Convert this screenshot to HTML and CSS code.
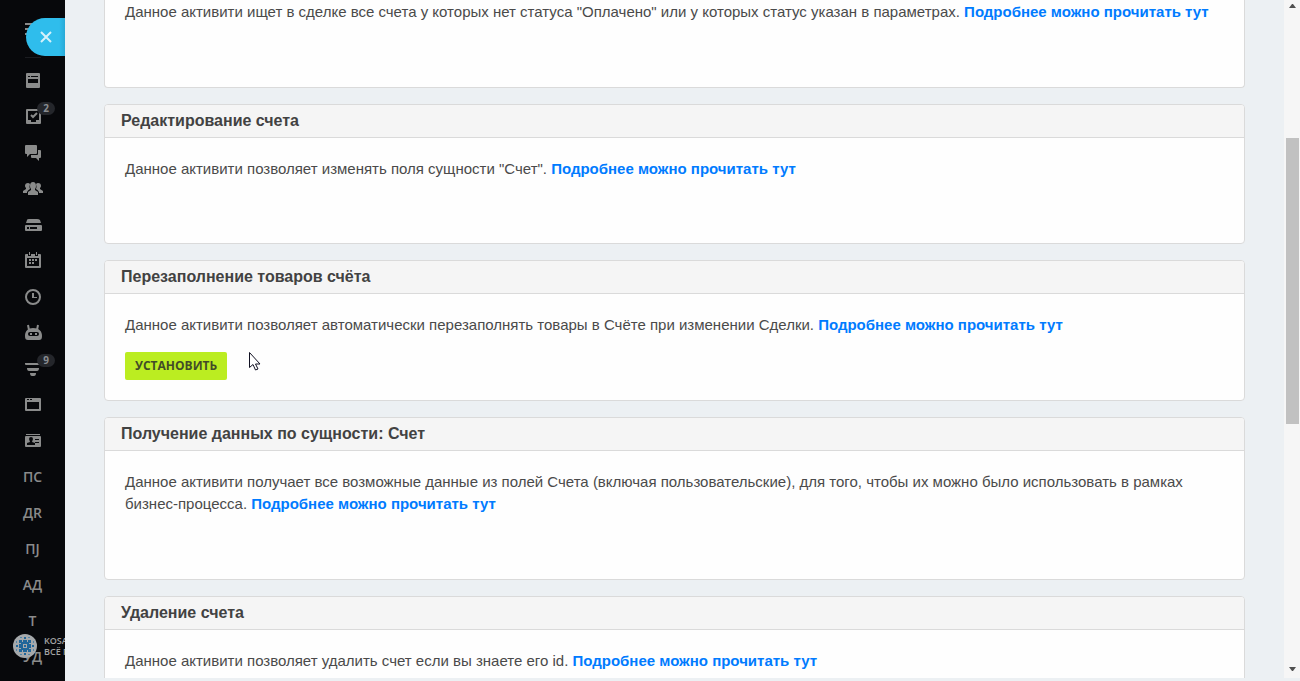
FILE: index.html
```html
<!DOCTYPE html>
<html lang="ru">
<head>
<meta charset="utf-8">
<meta name="viewport" content="width=device-width, initial-scale=1">
<title>Активити для счетов</title>
<link rel="stylesheet" href="styles.css">
</head>
<body>
<div class="app">
  <nav class="sidebar" aria-label="Главное меню">
    <div class="menu-top">
      <svg class="burger" width="16" height="13" viewBox="0 0 16 13"><path d="M0 1h16M0 6h16M0 11h16" stroke="#8a8a8a" stroke-width="2"/></svg>
    </div>
    <a class="item" href="#" aria-label="Лента"><svg class="icon" viewBox="0 0 20 20"><path fill-rule="evenodd" d="M4 2h12q1 0 1 1v13q0 1-1 1H4q-1 0-1-1V3q0-1 1-1zM5 5v1h2V5zM8 5v1h7V5zM5 8v4h10V8z"/></svg></a>
    <a class="item" href="#" aria-label="Задачи"><svg class="icon" viewBox="0 0 20 20"><path fill-rule="evenodd" d="M4 2h13q1 0 1 1v13q0 1-1 1H4q-1 0-1-1V3q0-1 1-1zM5 4v9h3v2h5v-2h3V4z"/><path d="M8 8l2 2 4-4" fill="none" stroke="#8a8b8b" stroke-width="2"/></svg><span class="badge">2</span></a>
    <a class="item" href="#" aria-label="Чат"><svg class="icon" viewBox="0 0 20 20"><path d="M3 2h10q1 0 1 1v7q0 1-1 1H7l-3 3v-3H3q-1 0-1-1V3q0-1 1-1z"/><path d="M15 7h2q1 0 1 1v6q0 1-1 1h-1v3l-3-3H9q-1 0-1-1v-2h6q1 0 1-1z"/></svg></a>
    <a class="item" href="#" aria-label="Группы"><svg class="icon" viewBox="0 0 20 20"><path d="M10 3q3 0 3 4 0 2-1 3v1l3 2v3H5v-3l3-2v-1Q7 9 7 7q0-4 3-4z"/><path d="M5 4q1 0 2 1-1 3 0 5-2 1-3 3v1H0v-2l3-2V9Q2 8 2 7q0-3 3-3zM15 4q-1 0-2 1 1 3 0 5 2 1 3 3v1h4v-2l-3-2V9q1-1 1-2 0-3-3-3z"/></svg></a>
    <a class="item" href="#" aria-label="Диск"><svg class="icon" viewBox="0 0 20 20"><path d="M6 4h8q2 0 3 1l1 3H3l1-3q0-1 2-1z"/><path fill-rule="evenodd" d="M3 10h15q1 0 1 1v4q0 1-1 1H3q-1 0-1-1v-4q0-1 1-1zM4 12v2h2v-2zM7 12v2h7v-2z"/></svg></a>
    <a class="item" href="#" aria-label="Календарь"><svg class="icon" viewBox="0 0 20 20"><path fill-rule="evenodd" d="M3 3h2v2h3V3h4v2h3V3h2q1 0 1 1v12q0 1-1 1H3q-1 0-1-1V4q0-1 1-1zM4 7v8h12V7z"/><path d="M6 1h1v3H6zM13 1h1v3h-1zM9 8h2v2H9zM12 8h2v2h-2zM6 8h2v2H6zM6 11h2v2H6zM9 11h2v2H9z"/></svg></a>
    <a class="item" href="#" aria-label="Время"><svg class="icon" viewBox="0 0 20 20"><circle cx="10" cy="10" r="7" fill="none" stroke="#8a8b8b" stroke-width="2"/><path d="M9 6h2v4h3v1H9z"/></svg></a>
    <a class="item" href="#" aria-label="Роботы"><svg class="icon" viewBox="0 0 20 20"><path d="M5 2l1 5M15 2l-1 5" stroke="#8a8b8b" stroke-width="2"/><path fill-rule="evenodd" d="M10 5c6 0 9 3 9 8 0 3-1 4-3 4H5c-2 0-3-1-3-4 0-5 3-8 8-8zM7 9q-2 0-2 2t2 2h7q2 0 2-2t-2-2z"/><path d="M7 10h2v2H7zM12 10h2v2h-2z"/></svg></a>
    <a class="item" href="#" aria-label="Воронка"><svg class="icon" viewBox="0 0 20 20"><path d="M2 4h16v1q0 1-1 1H3Q2 6 2 5zM4 9h12q0 3-2 3H6q-2 0-2-3zM7 14h6q0 3-2 3H9q-2 0-2-3z"/></svg><span class="badge">9</span></a>
    <a class="item" href="#" aria-label="Сайты"><svg class="icon" viewBox="0 0 20 20"><path fill-rule="evenodd" d="M3 3h14q1 0 1 1v11q0 1-1 1H3q-1 0-1-1V4q0-1 1-1zM4 7v7h12V7zM4 4v1h2V4zM7 4v1h2V4z"/></svg></a>
    <a class="item" href="#" aria-label="Контакты"><svg class="icon" viewBox="0 0 20 20"><path d="M3 3h14v1H3z"/><path fill-rule="evenodd" d="M3 5h14q1 0 1 1v9q0 1-1 1H3q-1 0-1-1V6q0-1 1-1zM8 6Q6 6 6 8l1 3-3 1v2h8v-2l-3-1 1-3q0-2-2-2zM12 8v1h4V8zM12 11v1h4v-1z"/></svg></a>
    <a class="item" href="#">ПС</a>
    <a class="item" href="#">ДR</a>
    <a class="item" href="#">ПJ</a>
    <a class="item" href="#">АД</a>
    <a class="item" href="#">Т</a>
    <a class="item" href="#">УД</a>
    <button class="close" type="button" aria-label="Закрыть"><svg width="12" height="12" viewBox="0 0 12 12"><path d="M1 1l10 10M11 1L1 11" stroke="#d5f2fb" stroke-width="2"/></svg></button>
    <div class="brand">
      <svg class="brand-logo" viewBox="0 0 24 24"><circle cx="12" cy="12" r="12" fill="#a5a9ac"/><path fill="#20669a" d="M6 6h3v3H6zM10 6h4v3h-4zM15 6h3v3h-3zM6 10h3v4H6zM15 10h3v4h-3zM6 15h3v3H6zM10 15h4v3h-4zM15 15h3v3h-3zM8 8h8v2H8zM8 14h8v2H8zM8 9h2v6H8zM14 9h2v6h-2z"/><path fill="#20669a" d="M11 11h2v2h-2zM11 3h2v2h-2zM11 19h2v2h-2zM3 11h2v2H3zM19 11h2v2h-2z"/><path fill="#5585a8" d="M7 3h2v1H7zM15 3h2v1h-2zM7 20h2v1H7zM15 20h2v1h-2zM3 7h1v2H3zM3 15h1v2H3zM20 7h1v2h-1zM20 15h1v2h-1z"/></svg>
      <span class="brand-text">KOSAREV<br>ВСЁ ПРОСТО</span>
    </div>
  </nav>

  <div class="panel">
    <main class="content">
      <section class="card card-scrolled">
        <p class="text">Данное активити ищет в сделке все счета у которых нет статуса "Оплачено" или у которых статус указан в параметрах. <a class="more" href="#">Подробнее можно прочитать тут</a></p>
      </section>
      <section class="card">
        <h2 class="title">Редактирование счета</h2>
        <div class="body"><p class="text">Данное активити позволяет изменять поля сущности "Счет". <a class="more" href="#">Подробнее можно прочитать тут</a></p></div>
      </section>
      <section class="card">
        <h2 class="title">Перезаполнение товаров счёта</h2>
        <div class="body">
          <p class="text">Данное активити позволяет автоматически перезаполнять товары в Счёте при изменении Сделки. <a class="more" href="#">Подробнее можно прочитать тут</a></p>
          <button class="install" type="button">УСТАНОВИТЬ</button>
        </div>
      </section>
      <section class="card card-tall">
        <h2 class="title">Получение данных по сущности: Счет</h2>
        <div class="body"><p class="text">Данное активити получает все возможные данные из полей Счета (включая пользовательские), для того, чтобы их можно было использовать в рамках бизнес-процесса. <a class="more" href="#">Подробнее можно прочитать тут</a></p></div>
      </section>
      <section class="card">
        <h2 class="title">Удаление счета</h2>
        <div class="body"><p class="text">Данное активити позволяет удалить счет если вы знаете его id. <a class="more" href="#">Подробнее можно прочитать тут</a></p></div>
      </section>
    </main>
    <div class="scrollbar" aria-hidden="true">
      <svg class="arrow" viewBox="0 0 7 4"><path d="M0 4h7L4 0H3z"/></svg>
      <div class="track"><div class="thumb"></div></div>
      <svg class="arrow" viewBox="0 0 7 4"><path d="M0 0h7L4 4H3z"/></svg>
    </div>
  </div>
</div>
<svg class="cursor" width="12" height="20" viewBox="0 0 12 20"><path d="M.5 .5v15l3.500-3 2.500 5.500 2.500-1L6.500 12H11z" fill="#fff" stroke="#111122"/></svg>
</body>
</html>
```

FILE: styles.css
```css
* { box-sizing: border-box; }

body {
  margin: 0;
  background: #ecf0f3;
  color: #4a4a4a;
  font-family: "Liberation Sans", Arial, sans-serif;
  font-size: 15px;
  line-height: 22px;
}

.app {
  display: flex;
  height: 100vh;
  overflow: hidden;
}

/* Dark navigation rail */
.sidebar {
  position: relative;
  flex: 0 0 65px;
  display: flex;
  flex-direction: column;
  overflow: hidden;
  background: #07080b;
}

.menu-top {
  flex: 0 0 58px;
  width: 16px;
  margin: 0 0 5px 25px;
  padding-top: 23px;
  border-bottom: 1px solid #1b1c20;
}

.burger { display: block; }

.item {
  position: relative;
  flex: 0 0 36px;
  display: flex;
  align-items: center;
  justify-content: center;
  color: #8a8b8b;
  font: 600 14px/20px "Open Sans", sans-serif;
  text-decoration: none;
}

.icon {
  width: 20px;
  height: 20px;
  fill: currentColor;
}

.badge {
  position: absolute;
  top: 3px;
  left: 37px;
  width: 18px;
  height: 13px;
  border-radius: 7px;
  background: #24262b;
  color: #8a8d92;
  font-size: 10px;
  font-weight: 700;
  line-height: 13px;
  text-align: center;
}

.close {
  position: absolute;
  top: 18px;
  right: 0;
  display: flex;
  align-items: center;
  width: 39px;
  height: 38px;
  padding: 0 0 0 14px;
  border: 0;
  border-radius: 19px 0 0 19px;
  background: linear-gradient(90deg, #2fbdec 85%, #28a9d6);
}

.brand {
  position: absolute;
  top: 634px;
  left: 13px;
  display: flex;
  align-items: center;
  gap: 7px;
  white-space: nowrap;
}

.brand-logo {
  width: 24px;
  height: 24px;
}

.brand-text {
  color: #a2a3a3;
  font: 600 9px/11px "Open Sans", sans-serif;
}

/* Slider panel */
.panel {
  flex: 1;
  display: flex;
  min-width: 0;
  padding-bottom: 3px;
}

.content {
  flex: 1;
  display: flex;
  flex-direction: column;
  gap: 16px;
  min-width: 0;
  padding: 0 39px;
  overflow: hidden;
}

.card {
  flex: none;
  min-height: 140px;
  border: 1px solid #dadada;
  border-radius: 4px;
  background: #fefefe;
}

.card-scrolled {
  min-height: 88px;
  padding: 1px 20px;
  border-top: 0;
  border-radius: 0 0 4px 4px;
}

.card-tall { min-height: 163px; }

.title {
  margin: 0;
  padding: 5px 16px;
  border-bottom: 1px solid #dadada;
  border-radius: 3px 3px 0 0;
  background: #f5f5f5;
  color: #424242;
  font-size: 16px;
  line-height: 22px;
}

.body {
  display: flex;
  flex-direction: column;
  align-items: flex-start;
  gap: 16px;
  padding: 20px;
}

.text { margin: 0; }

.more {
  color: #007bff;
  font-weight: 700;
  text-decoration: none;
}

.install {
  height: 28px;
  padding: 0 10px;
  border: 0;
  border-radius: 2px;
  background: #bbed21;
  color: #424b28;
  font: 700 12px/28px "Open Sans", sans-serif;
}

.scrollbar {
  flex: 0 0 16px;
  display: flex;
  flex-direction: column;
  align-items: center;
  padding: 4px 0 7px;
  background: #f6f6f6;
}

.arrow {
  width: 7px;
  height: 4px;
  fill: #505050;
}

.track {
  flex: 1;
  width: 13px;
  padding-top: 130px;
}

.thumb {
  height: 54%;
  background: #c1c1c1;
}

.cursor {
  position: absolute;
  top: 352px;
  left: 249px;
  pointer-events: none;
}
```
